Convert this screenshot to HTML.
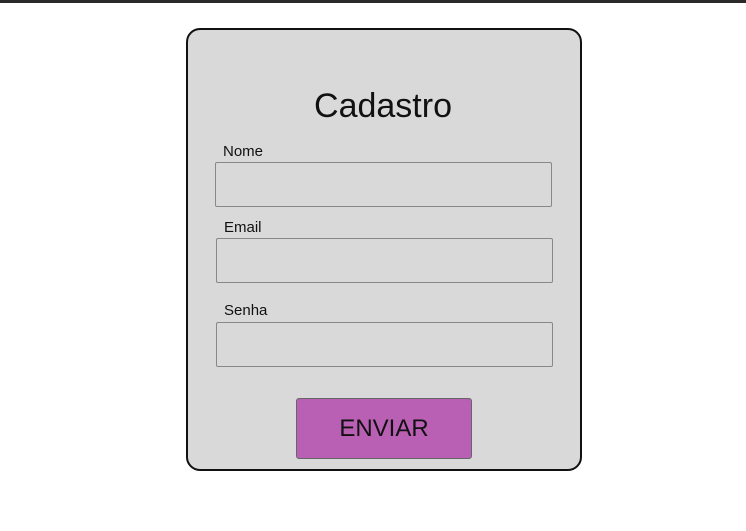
<!DOCTYPE html>
<html><head><style>
body{margin:0;width:746px;height:531px;background:#fff;position:relative;overflow:hidden;font-family:"Liberation Sans",sans-serif;color:#111}
.top{position:absolute;left:0;top:0;width:746px;height:3px;background:#2a2a2a}
.card{position:absolute;left:186px;top:28px;width:392px;height:439px;border:2px solid #111;border-radius:14px;background:#d9d9d9}
.t{position:absolute;left:20px;width:726px;text-align:center;top:86px;font-size:34px;line-height:40px}
.l{position:absolute;font-size:15px;line-height:18px}
.i{position:absolute;border:1px solid #888;border-radius:2px;box-sizing:border-box;width:337px;height:45px}
.b{position:absolute;left:296px;top:398px;width:176px;height:61px;box-sizing:border-box;background:#b960b5;border:1px solid #666;border-radius:3px;text-align:center;line-height:60px;font-size:24px}
</style></head><body>
<div class="top"></div>
<div class="card"></div>
<div class="t">Cadastro</div>
<div class="l" style="left:223px;top:143px">Nome</div>
<div class="i" style="left:215px;top:162px"></div>
<div class="l" style="left:224px;top:219px">Email</div>
<div class="i" style="left:216px;top:238px"></div>
<div class="l" style="left:224px;top:302px">Senha</div>
<div class="i" style="left:216px;top:322px"></div>
<div class="b">ENVIAR</div>
</body></html>
